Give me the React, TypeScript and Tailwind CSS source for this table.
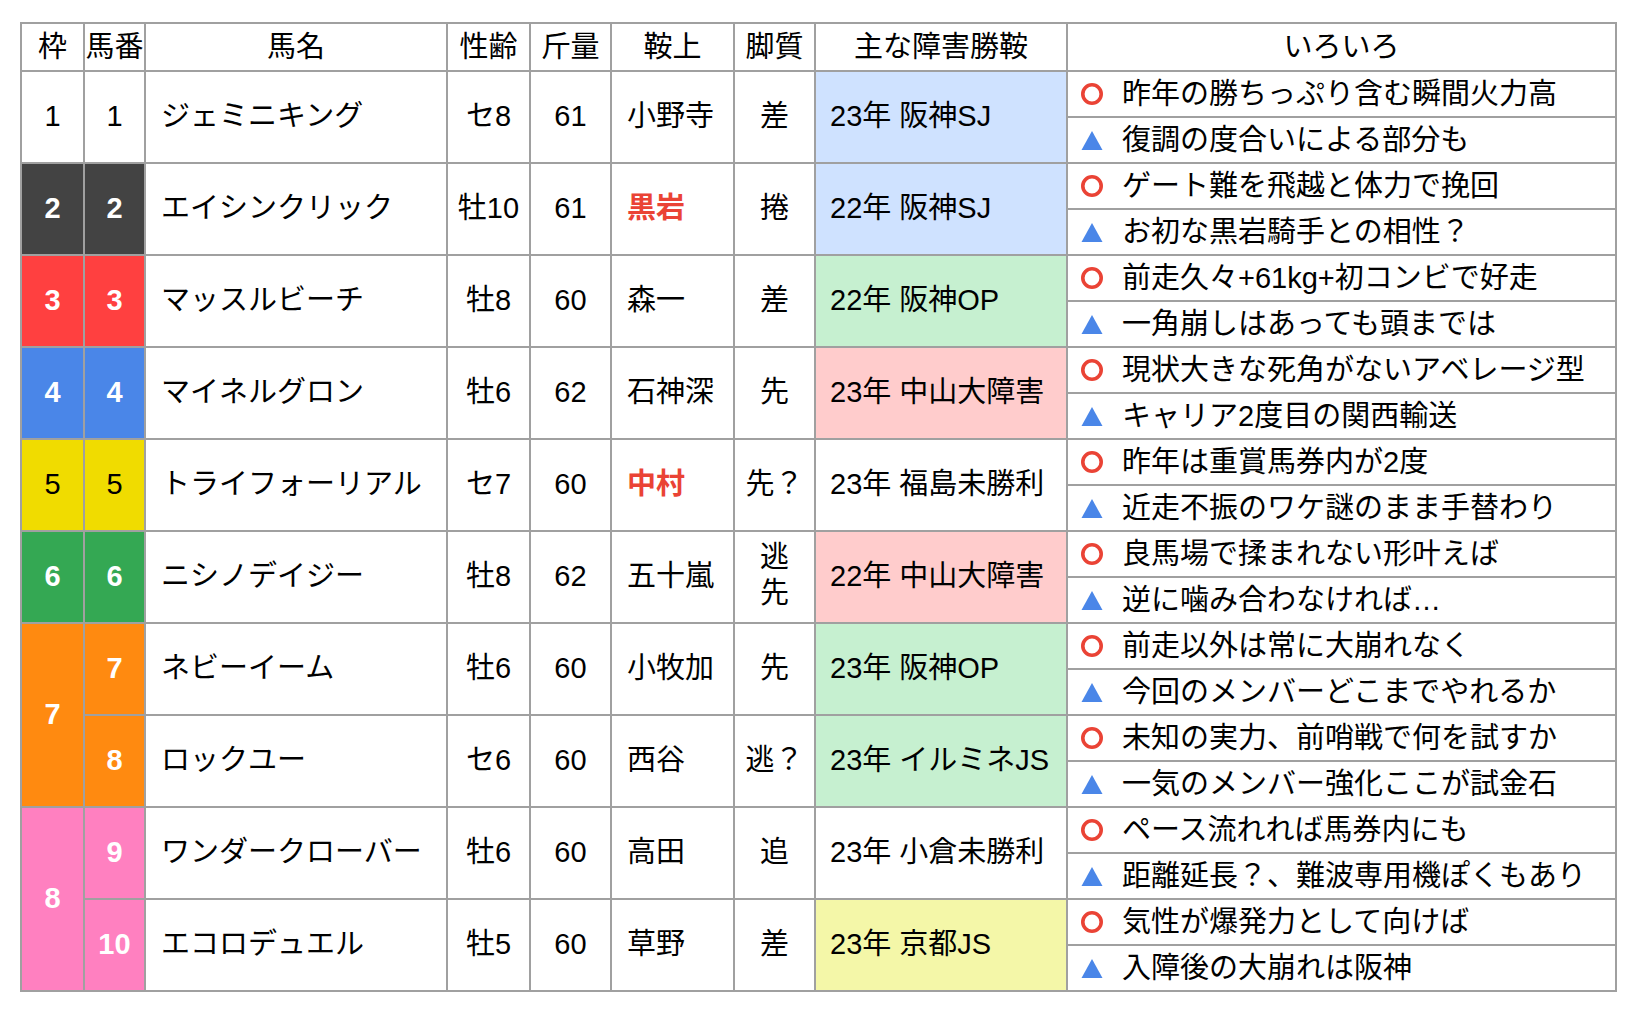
import React from "react";

type Row = {
  waku?: { n: number; span: number; bg: string; fg: string };
  uma: number;
  umaBg: string;
  umaFg: string;
  name: string;
  sei: string;
  kin: string;
  jockey: string;
  jockeyRed?: boolean;
  style: React.ReactNode;
  win: string;
  winBg: string;
  good: string;
  bad: string;
};

const rows: Row[] = [
  { waku: { n: 1, span: 2, bg: "bg-white", fg: "text-black font-normal" }, uma: 1, umaBg: "bg-white", umaFg: "text-black font-normal", name: "ジェミニキング", sei: "セ8", kin: "61", jockey: "小野寺", style: "差", win: "23年 阪神SJ", winBg: "bg-[#cfe2ff]", good: "昨年の勝ちっぷり含む瞬間火力高", bad: "復調の度合いによる部分も" },
  { waku: { n: 2, span: 2, bg: "bg-[#434343]", fg: "text-white font-bold" }, uma: 2, umaBg: "bg-[#434343]", umaFg: "text-white font-bold", name: "エイシンクリック", sei: "牡10", kin: "61", jockey: "黒岩", jockeyRed: true, style: "捲", win: "22年 阪神SJ", winBg: "bg-[#cfe2ff]", good: "ゲート難を飛越と体力で挽回", bad: "お初な黒岩騎手との相性？" },
  { waku: { n: 3, span: 2, bg: "bg-[#ff4040]", fg: "text-white font-bold" }, uma: 3, umaBg: "bg-[#ff4040]", umaFg: "text-white font-bold", name: "マッスルビーチ", sei: "牡8", kin: "60", jockey: "森一", style: "差", win: "22年 阪神OP", winBg: "bg-[#c6f0d0]", good: "前走久々+61kg+初コンビで好走", bad: "一角崩しはあっても頭までは" },
  { waku: { n: 4, span: 2, bg: "bg-[#4a86e8]", fg: "text-white font-bold" }, uma: 4, umaBg: "bg-[#4a86e8]", umaFg: "text-white font-bold", name: "マイネルグロン", sei: "牡6", kin: "62", jockey: "石神深", style: "先", win: "23年 中山大障害", winBg: "bg-[#ffcccc]", good: "現状大きな死角がないアベレージ型", bad: "キャリア2度目の関西輸送" },
  { waku: { n: 5, span: 2, bg: "bg-[#f0dc00]", fg: "text-black font-normal" }, uma: 5, umaBg: "bg-[#f0dc00]", umaFg: "text-black font-normal", name: "トライフォーリアル", sei: "セ7", kin: "60", jockey: "中村", jockeyRed: true, style: "先？", win: "23年 福島未勝利", winBg: "bg-white", good: "昨年は重賞馬券内が2度", bad: "近走不振のワケ謎のまま手替わり" },
  { waku: { n: 6, span: 2, bg: "bg-[#34a853]", fg: "text-white font-bold" }, uma: 6, umaBg: "bg-[#34a853]", umaFg: "text-white font-bold", name: "ニシノデイジー", sei: "牡8", kin: "62", jockey: "五十嵐", style: (<span className="inline-block leading-[36px]">逃<br />先</span>), win: "22年 中山大障害", winBg: "bg-[#ffcccc]", good: "良馬場で揉まれない形叶えば", bad: "逆に噛み合わなければ…" },
  { waku: { n: 7, span: 4, bg: "bg-[#ff8a10]", fg: "text-white font-bold" }, uma: 7, umaBg: "bg-[#ff8a10]", umaFg: "text-white font-bold", name: "ネビーイーム", sei: "牡6", kin: "60", jockey: "小牧加", style: "先", win: "23年 阪神OP", winBg: "bg-[#c6f0d0]", good: "前走以外は常に大崩れなく", bad: "今回のメンバーどこまでやれるか" },
  { uma: 8, umaBg: "bg-[#ff8a10]", umaFg: "text-white font-bold", name: "ロックユー", sei: "セ6", kin: "60", jockey: "西谷", style: "逃？", win: "23年 イルミネJS", winBg: "bg-[#c6f0d0]", good: "未知の実力、前哨戦で何を試すか", bad: "一気のメンバー強化ここが試金石" },
  { waku: { n: 8, span: 4, bg: "bg-[#ff80c0]", fg: "text-white font-bold" }, uma: 9, umaBg: "bg-[#ff80c0]", umaFg: "text-white font-bold", name: "ワンダークローバー", sei: "牡6", kin: "60", jockey: "高田", style: "追", win: "23年 小倉未勝利", winBg: "bg-white", good: "ペース流れれば馬券内にも", bad: "距離延長？、難波専用機ぽくもあり" },
  { uma: 10, umaBg: "bg-[#ff80c0]", umaFg: "text-white font-bold", name: "エコロデュエル", sei: "牡5", kin: "60", jockey: "草野", style: "差", win: "23年 京都JS", winBg: "bg-[#f4f7a8]", good: "気性が爆発力として向けば", bad: "入障後の大崩れは阪神" },
];

const Circle = () => (
  <svg width="24" height="24" viewBox="0 0 24 24" className="shrink-0">
    <circle cx="12" cy="12" r="9.2" fill="none" stroke="#ea4335" strokeWidth="3.6" />
  </svg>
);

const Tri = () => (
  <svg width="24" height="24" viewBox="0 0 24 24" className="shrink-0">
    <polygon points="12,3 22.5,22 1.5,22" fill="#4a86e8" />
  </svg>
);

const cellB = "border-2 border-[#a0a0a0]";

export default function App() {
  return (
    <div className="min-h-[1011px] w-[1639px] bg-white pl-[20px] pt-[22px]" style={{ fontFamily: '"Liberation Sans", "Noto Sans CJK JP", sans-serif' }}>
      <table className="table-fixed border-collapse text-[29px] text-black w-[1597px]">
        <colgroup>
          <col className="w-[63px]" />
          <col className="w-[61px]" />
          <col className="w-[302px]" />
          <col className="w-[83px]" />
          <col className="w-[81px]" />
          <col className="w-[123px]" />
          <col className="w-[81px]" />
          <col className="w-[252px]" />
          <col className="w-[549px]" />
        </colgroup>
        <thead>
          <tr className="h-[48px]">
            {["枠", "馬番", "馬名", "性齢", "斤量", "鞍上", "脚質", "主な障害勝鞍", "いろいろ"].map((h) => (
              <th key={h} className={`${cellB} p-0 text-center font-normal whitespace-nowrap leading-none`}>{h}</th>
            ))}
          </tr>
        </thead>
        <tbody>
          {rows.map((r) => (
            <React.Fragment key={r.uma}>
              <tr className="h-[46px]">
                {r.waku && (
                  <td rowSpan={r.waku.span} className={`${cellB} ${r.waku.bg} ${r.waku.fg} p-0 text-center`}>{r.waku.n}</td>
                )}
                <td rowSpan={2} className={`${cellB} ${r.umaBg} ${r.umaFg} p-0 text-center`}>{r.uma}</td>
                <td rowSpan={2} className={`${cellB} p-0 pl-[15px] text-left whitespace-nowrap`}>{r.name}</td>
                <td rowSpan={2} className={`${cellB} p-0 text-center whitespace-nowrap`}>{r.sei}</td>
                <td rowSpan={2} className={`${cellB} p-0 text-center`}>{r.kin}</td>
                <td rowSpan={2} className={`${cellB} p-0 pl-[15px] text-left whitespace-nowrap ${r.jockeyRed ? "font-bold text-[#ea4335]" : ""}`}>{r.jockey}</td>
                <td rowSpan={2} className={`${cellB} p-0 text-center whitespace-nowrap`}>{r.style}</td>
                <td rowSpan={2} className={`${cellB} ${r.winBg} p-0 pl-[14px] text-left whitespace-nowrap`}>{r.win}</td>
                <td className={`${cellB} p-0 pl-[12px]`}>
                  <div className="flex items-center gap-[18px] whitespace-nowrap leading-none">
                    <Circle />
                    <span>{r.good}</span>
                  </div>
                </td>
              </tr>
              <tr className="h-[46px]">
                <td className={`${cellB} p-0 pl-[12px]`}>
                  <div className="flex items-center gap-[18px] whitespace-nowrap leading-none">
                    <Tri />
                    <span>{r.bad}</span>
                  </div>
                </td>
              </tr>
            </React.Fragment>
          ))}
        </tbody>
      </table>
    </div>
  );
}
